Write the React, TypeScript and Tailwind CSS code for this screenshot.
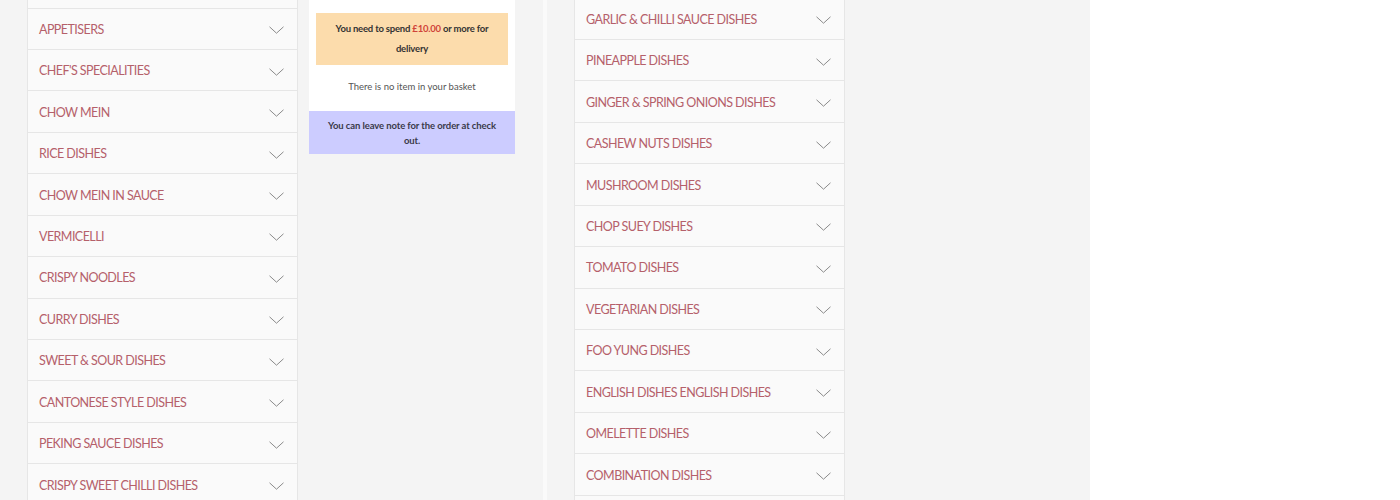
const leftMenu = [
  "APPETISERS",
  "CHEF'S SPECIALITIES",
  "CHOW MEIN",
  "RICE DISHES",
  "CHOW MEIN IN SAUCE",
  "VERMICELLI",
  "CRISPY NOODLES",
  "CURRY DISHES",
  "SWEET & SOUR DISHES",
  "CANTONESE STYLE DISHES",
  "PEKING SAUCE DISHES",
  "CRISPY SWEET CHILLI DISHES",
];

const rightMenu = [
  "GARLIC & CHILLI SAUCE DISHES",
  "PINEAPPLE DISHES",
  "GINGER & SPRING ONIONS DISHES",
  "CASHEW NUTS DISHES",
  "MUSHROOM DISHES",
  "CHOP SUEY DISHES",
  "TOMATO DISHES",
  "VEGETARIAN DISHES",
  "FOO YUNG DISHES",
  "ENGLISH DISHES ENGLISH DISHES",
  "OMELETTE DISHES",
  "COMBINATION DISHES",
  "",
];

function Chevron() {
  return (
    <svg width="15" height="8" viewBox="0 0 15 8" className="shrink-0">
      <path d="M0.5 0.8 L7.5 7.2 L14.5 0.8" fill="none" stroke="#8a8a8a" strokeWidth="1" />
    </svg>
  );
}

function MenuRow({ title }: { title: string }) {
  return (
    <div className="flex h-[41.45px] items-center justify-between border-b border-x border-[#e6e6e6] bg-[#fafafa] pl-[11px] pr-[13px] pt-[3px]">
      <span className="text-[12.5px] tracking-[-0.55px] text-[#b5606a]">{title}</span>
      {title && <Chevron />}
    </div>
  );
}

export default function App() {
  return (
    <div className="flex h-[500px] overflow-hidden bg-white" style={{ fontFamily: "Lato, 'Open Sans', sans-serif" }}>
      <div className="flex w-[543px] shrink-0 bg-[#f4f4f4] pl-[27px]">
        <div className="w-[271px] shrink-0">
          <div className="h-[8.5px] border-x border-b border-[#e6e6e6] bg-[#fafafa]" />
          {leftMenu.map((m) => (
            <MenuRow key={m} title={m} />
          ))}
        </div>
        <div className="ml-[11px] w-[206px] shrink-0 self-start">
          <div className="bg-white px-[7px] pt-[13px] pb-[18px]">
            <div className="bg-[#fcdcac] px-2 py-[6px] text-center text-[9.5px] font-bold leading-[20px] tracking-[-0.2px] text-[#333]">
              You need to spend <span className="text-[#d0433a]">£10.00</span> or more for delivery
            </div>
            <div className="mt-[16px] text-center text-[9.5px] leading-[12px] text-[#555]">There is no item in your basket</div>
          </div>
          <div className="bg-[#ccccff] px-[17px] py-[6.5px] text-center text-[9.5px] font-bold leading-[15px] tracking-[-0.1px] text-[#3a3a4a]">
            You can leave note for the order at check out.
          </div>
        </div>
      </div>
      <div className="w-[4px] shrink-0 bg-[#fafafa]" />
      <div className="w-[543px] shrink-0 bg-[#f4f4f4] pl-[27px]">
        <div className="-mt-[1.5px] w-[271px]">
          {rightMenu.map((m, i) => (
            <MenuRow key={i} title={m} />
          ))}
        </div>
      </div>
    </div>
  );
}
